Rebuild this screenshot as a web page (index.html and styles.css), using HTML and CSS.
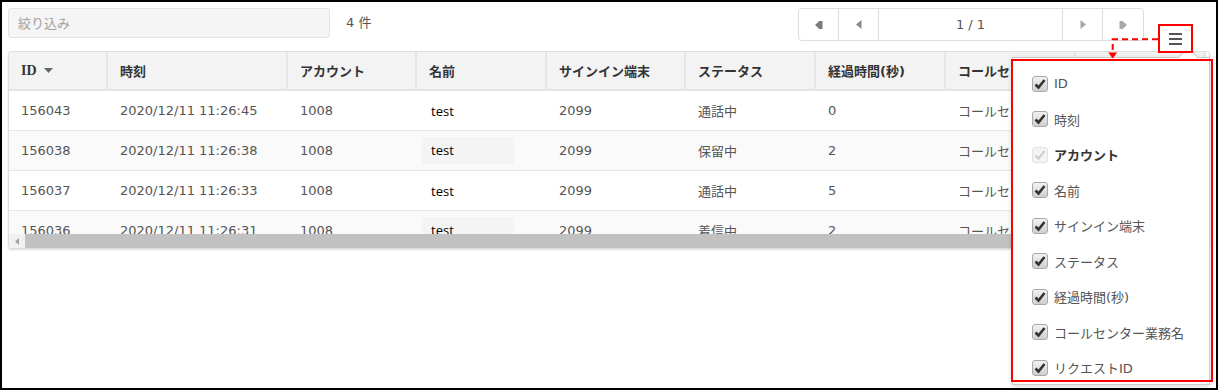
FILE: index.html
```html
<!DOCTYPE html>
<html lang="ja">
<head>
  <meta charset="UTF-8" />
  <title>コール一覧</title>
  <link rel="stylesheet" href="styles.css">
</head>
<body>
<div class="frame">

  <!-- Toolbar -->
  <div class="toolbar">
    <input type="text" class="filter" placeholder="絞り込み" />
    <span class="count">4 件</span>
    <div class="pager">
      <button class="pg pg-first"><svg width="8" height="10" viewBox="0 0 8 10"><polygon points="0,5 5,0.5 5,9.5" fill="#7a7a7a"/><rect x="4.5" y="1" width="3" height="8" fill="#7a7a7a"/></svg></button>
      <button class="pg pg-prev"><svg width="6" height="9" viewBox="0 0 6 9"><polygon points="0,4.5 5.5,0 5.5,9" fill="#8a8a8a"/></svg></button>
      <span class="pg-page">1 / 1</span>
      <button class="pg pg-next"><svg width="6" height="9" viewBox="0 0 6 9"><polygon points="6,4.5 0.5,0 0.5,9" fill="#a8a8a8"/></svg></button>
      <button class="pg pg-last"><svg width="8" height="10" viewBox="0 0 8 10"><polygon points="8,5 3,0.5 3,9.5" fill="#a8a8a8"/><rect x="0.5" y="1" width="3" height="8" fill="#a8a8a8"/></svg></button>
    </div>
  </div>

  <!-- Grid -->
  <div class="grid">
    <div class="grid-body">
      <table class="calls">
        <colgroup>
          <col class="c-id"><col class="c-time"><col class="c-acc"><col class="c-name"><col class="c-term">
          <col class="c-status"><col class="c-elapsed"><col class="c-center"><col class="c-req">
        </colgroup>
        <thead>
          <tr>
            <th><span class="th-id">ID</span> <svg class="sort" width="9" height="5" viewBox="0 0 9 5"><polygon points="0,0 9,0 4.5,5" fill="#666"/></svg></th>
            <th>時刻</th>
            <th>アカウント</th>
            <th>名前</th>
            <th>サインイン端末</th>
            <th>ステータス</th>
            <th>経過時間(秒)</th>
            <th>コールセンター業務名</th>
            <th>リクエストID</th>
          </tr>
        </thead>
        <tbody>
          <tr>
            <td>156043</td><td>2020/12/11 11:26:45</td><td>1008</td>
            <td class="name"><span class="name-text">test</span></td>
            <td>2099</td><td>通話中</td><td>0</td><td>コールセンター業務</td><td></td>
          </tr>
          <tr class="odd">
            <td>156038</td><td>2020/12/11 11:26:38</td><td>1008</td>
            <td class="name"><span class="name-text name-patch">test</span></td>
            <td>2099</td><td>保留中</td><td>2</td><td>コールセンター業務</td><td></td>
          </tr>
          <tr>
            <td>156037</td><td>2020/12/11 11:26:33</td><td>1008</td>
            <td class="name"><span class="name-text">test</span></td>
            <td>2099</td><td>通話中</td><td>5</td><td>コールセンター業務</td><td></td>
          </tr>
          <tr class="odd">
            <td>156036</td><td>2020/12/11 11:26:31</td><td>1008</td>
            <td class="name"><span class="name-text name-patch">test</span></td>
            <td>2099</td><td>着信中</td><td>2</td><td>コールセンター業務</td><td></td>
          </tr>
        </tbody>
      </table>
    </div>
    <div class="hscroll">
      <span class="hscroll-arrow"><svg width="4" height="7" viewBox="0 0 4 7"><polygon points="0,3.5 4,0 4,7" fill="#a3a3a3"/></svg></span>
      <span class="hscroll-thumb"></span>
    </div>
  </div>

  <!-- Column chooser popup -->
  <div class="col-menu">
    <label class="col-item"><span class="cb"><svg width="12" height="12" viewBox="0 0 12 12"><path d="M1.5 6.5 L4.5 9.5 L10.5 2" fill="none" stroke="#333" stroke-width="2.6"/></svg></span>ID</label>
    <label class="col-item"><span class="cb"><svg width="12" height="12" viewBox="0 0 12 12"><path d="M1.5 6.5 L4.5 9.5 L10.5 2" fill="none" stroke="#333" stroke-width="2.6"/></svg></span>時刻</label>
    <label class="col-item col-fixed"><span class="cb cb-disabled"><svg width="12" height="12" viewBox="0 0 12 12"><path d="M1.5 6.5 L4.5 9.5 L10.5 2" fill="none" stroke="#cfcfcf" stroke-width="2.2"/></svg></span>アカウント</label>
    <label class="col-item"><span class="cb"><svg width="12" height="12" viewBox="0 0 12 12"><path d="M1.5 6.5 L4.5 9.5 L10.5 2" fill="none" stroke="#333" stroke-width="2.6"/></svg></span>名前</label>
    <label class="col-item"><span class="cb"><svg width="12" height="12" viewBox="0 0 12 12"><path d="M1.5 6.5 L4.5 9.5 L10.5 2" fill="none" stroke="#333" stroke-width="2.6"/></svg></span>サインイン端末</label>
    <label class="col-item"><span class="cb"><svg width="12" height="12" viewBox="0 0 12 12"><path d="M1.5 6.5 L4.5 9.5 L10.5 2" fill="none" stroke="#333" stroke-width="2.6"/></svg></span>ステータス</label>
    <label class="col-item"><span class="cb"><svg width="12" height="12" viewBox="0 0 12 12"><path d="M1.5 6.5 L4.5 9.5 L10.5 2" fill="none" stroke="#333" stroke-width="2.6"/></svg></span>経過時間(秒)</label>
    <label class="col-item"><span class="cb"><svg width="12" height="12" viewBox="0 0 12 12"><path d="M1.5 6.5 L4.5 9.5 L10.5 2" fill="none" stroke="#333" stroke-width="2.6"/></svg></span>コールセンター業務名</label>
    <label class="col-item"><span class="cb"><svg width="12" height="12" viewBox="0 0 12 12"><path d="M1.5 6.5 L4.5 9.5 L10.5 2" fill="none" stroke="#333" stroke-width="2.6"/></svg></span>リクエストID</label>
  </div>

  <!-- Menu toggle + annotation marks -->
  <div class="mark mark-toggle">
    <svg class="burger" width="13" height="12" viewBox="0 0 13 12"><rect y="0" width="13" height="2" fill="#555"/><rect y="5" width="13" height="2" fill="#555"/><rect y="10" width="13" height="2" fill="#555"/></svg>
  </div>
  <svg class="mark-arrow" width="54" height="24" viewBox="0 0 54 24">
    <path d="M52 3.3 H6.7 V17" fill="none" stroke="#f00" stroke-width="2" stroke-dasharray="6 4"/>
    <polygon points="2.2,16.5 11.2,16.5 6.7,22.5" fill="#f00"/>
  </svg>
  <div class="mark mark-menu"></div>

</div>
</body>
</html>
```

FILE: styles.css
```css
/* General */
body {
  margin: 0;
  font-family: "DejaVu Sans", "Noto Sans CJK JP", sans-serif;
  font-size: 13px;
  color: #555;
  background: #fff;
}

.frame {
  position: relative;
  height: 390px;
  box-sizing: border-box;
  border: 2px solid #000;
  padding: 6px 6px 0;
  overflow: hidden;
}

/* Toolbar */
.toolbar {
  display: flex;
  align-items: flex-start;
  height: 33px;
  margin-bottom: 10px;
}

.filter {
  width: 322px;
  height: 30px;
  box-sizing: border-box;
  padding: 0 9px;
  border: 1px solid #e2e2e2;
  border-radius: 3px;
  background: #f5f5f5;
  font-family: inherit;
  font-size: 13px;
  color: #555;
  outline: none;
}

.filter::placeholder {
  color: #a2a2a2;
}

.count {
  margin-left: 16px;
  line-height: 30px;
}

/* Pager */
.pager {
  display: flex;
  width: 346px;
  height: 33px;
  box-sizing: border-box;
  margin-left: auto;
  margin-right: 66px;
  border: 1px solid #ddd;
  border-radius: 4px;
  background: #fff;
}

.pg {
  width: 40px;
  padding: 0;
  border: none;
  border-right: 1px solid #ddd;
  background: transparent;
  display: flex;
  align-items: center;
  justify-content: center;
}

.pg-next {
  width: 41px;
  border-left: 1px solid #ddd;
}

.pg-last {
  border-right: none;
}

.pg-page {
  flex: 1;
  display: flex;
  align-items: center;
  justify-content: center;
  color: #555;
}

/* Grid */
.grid {
  border: 1px solid #ddd;
  border-radius: 3px;
  box-shadow: 0 1px 2px rgba(0, 0, 0, 0.14);
  overflow: hidden;
}

.grid-body {
  height: 182px;
  overflow: hidden;
}

.calls {
  table-layout: fixed;
  width: 1197px;
  border-collapse: separate;
  border-spacing: 0;
}

.c-id { width: 99px; }
.c-time { width: 180px; }
.c-acc { width: 129px; }
.c-name { width: 130px; }
.c-term { width: 139px; }
.c-status { width: 130px; }
.c-elapsed { width: 130px; }
.c-center { width: 130px; }
.c-req { width: 130px; }

.calls th {
  height: 39px;
  box-sizing: border-box;
  padding: 0 12px;
  text-align: left;
  font-weight: bold;
  color: #333;
  background: #f3f3f3;
  border-bottom: 2px solid #e4e4e4;
  border-right: 2px solid #e6e6e6;
  white-space: nowrap;
  overflow: hidden;
}

.th-id {
  font-family: "Liberation Serif", serif;
  font-size: 14px;
}

.sort {
  margin-left: 3px;
  vertical-align: 2px;
}

.calls td {
  height: 40px;
  box-sizing: border-box;
  padding: 0 12px;
  border-bottom: 1px solid #e6e6e6;
  white-space: nowrap;
  overflow: hidden;
  background: #fff;
}

.calls tr.odd td {
  background: #fafafa;
}

.calls td.name {
  padding-left: 14px;
}

.name-text {
  font-family: "Open Sans", sans-serif;
  font-size: 13px;
  color: #000;
}

.name-patch {
  display: inline-block;
  width: 74px;
  margin-left: -9px;
  padding: 4px 9px 5px;
  background: #f4f4f4;
}

/* Fake horizontal scrollbar */
.hscroll {
  display: flex;
  height: 14px;
  background: #f1f1f1;
}

.hscroll-arrow {
  width: 16px;
  display: flex;
  align-items: center;
  justify-content: center;
}

.hscroll-thumb {
  flex: 1;
  background: #c1c1c1;
}

/* Column chooser popup */
.col-menu {
  position: absolute;
  left: 1010px;
  top: 55px;
  width: 198px;
  height: 328px;
  box-sizing: border-box;
  padding: 8px 0 0 19px;
  border: 1px solid #ccc;
  background: #fff;
  box-shadow: 0 2px 6px rgba(0, 0, 0, 0.15);
}

.col-menu::before {
  content: '';
  position: absolute;
  left: 168px;
  top: -8px;
  width: 13px;
  height: 13px;
  background: #fff;
  border-top: 1px solid #ccc;
  border-left: 1px solid #ccc;
  transform: rotate(45deg);
}

.col-item {
  display: flex;
  align-items: center;
  gap: 6px;
  height: 35.5px;
  white-space: nowrap;
}

.col-fixed {
  color: #333;
  font-weight: 600;
}

.cb {
  width: 16px;
  height: 16px;
  box-sizing: border-box;
  border: 1px solid #a9a9a9;
  border-radius: 3px;
  background: linear-gradient(#f2f2f2, #cfcfcf);
  display: flex;
  align-items: center;
  justify-content: center;
}

.cb-disabled {
  border-color: #e2e2e2;
  background: #f4f4f4;
}

/* Red annotation marks */
.mark {
  position: absolute;
  box-sizing: border-box;
  border: 2px solid #f00;
}

.mark-toggle {
  left: 1156px;
  top: 22px;
  width: 35px;
  height: 29px;
  background: #fff;
}

.burger {
  display: block;
  margin: 7px 0 0 9px;
}

.mark-menu {
  left: 1009px;
  top: 57px;
  width: 202px;
  height: 323px;
}

.mark-arrow {
  position: absolute;
  left: 1104px;
  top: 34px;
}
```
